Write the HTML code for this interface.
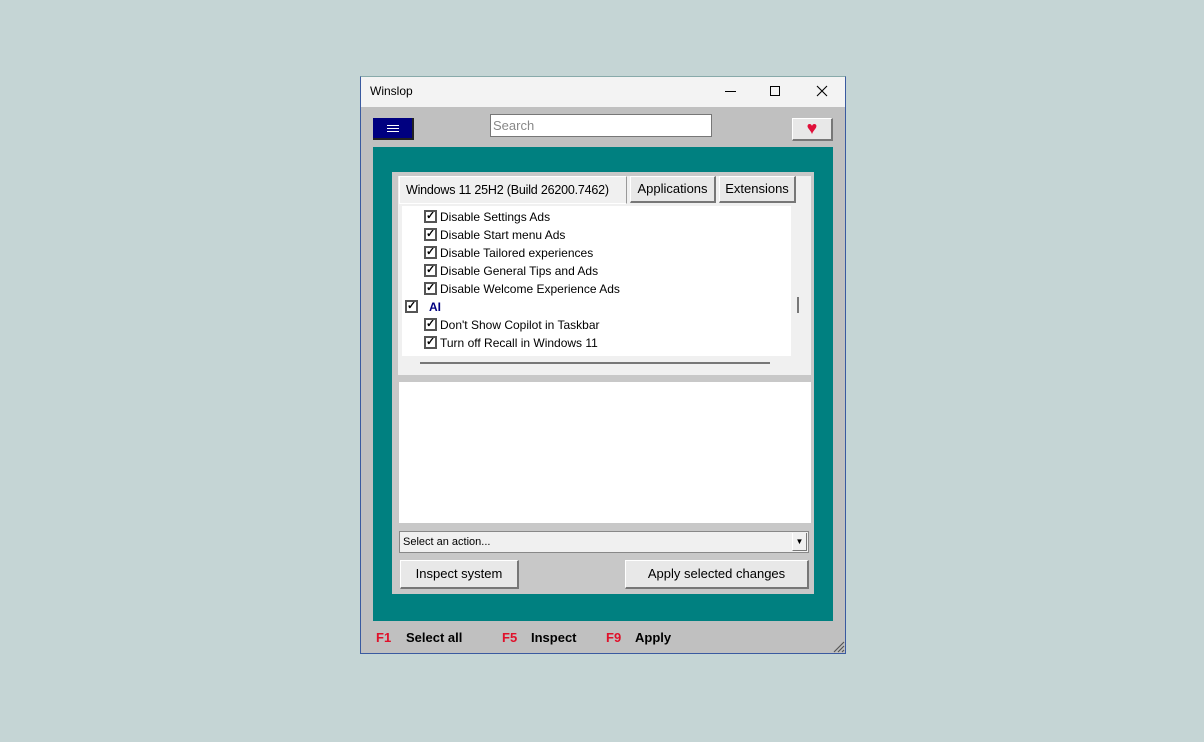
<!DOCTYPE html>
<html><head><meta charset="utf-8"><style>
*{margin:0;padding:0;box-sizing:border-box}
body{width:1204px;height:742px;background:#c5d5d5;position:relative;overflow:hidden;font-family:"Liberation Sans",Arial,sans-serif}
.a{position:absolute;white-space:nowrap}
.chk{position:absolute;width:13px;height:13px;border:2px solid #555;background:#fff;font-size:11px;line-height:9px;text-align:center;font-weight:bold;color:#000}
.it{position:absolute;font-size:12px;color:#000;white-space:nowrap}
.btn{position:absolute;background:#e8e8e8;border:1px solid #fff;border-right:2px solid #777;border-bottom:2px solid #777;font-size:13px;text-align:center;white-space:nowrap}
</style></head><body>
<div class="a" style="left:360px;top:76px;width:486px;height:578px;background:#c0c0c0;border:1px solid #3a5aa0;border-top-color:#8aa;"></div>
<div class="a" style="left:361px;top:77px;width:484px;height:30px;background:#f3f3f3"></div>
<div class="a" style="left:370px;top:84px;font-size:12px">Winslop</div>
<div class="a" style="left:725px;top:91px;width:11px;height:1px;background:#000"></div>
<div class="a" style="left:770px;top:86px;width:10px;height:10px;border:1px solid #000"></div>
<svg class="a" style="left:816px;top:85px" width="12" height="12"><path d="M1 1L11 11M11 1L1 11" stroke="#000" stroke-width="1.1"/></svg>
<div class="a" style="left:373px;top:118px;width:41px;height:22px;background:#000080;border-right:2px solid #222;border-bottom:2px solid #222"></div>
<div class="a" style="left:387px;top:125px;width:12px;height:7px;border-top:1px solid #fff;border-bottom:1px solid #fff"></div>
<div class="a" style="left:387px;top:128px;width:12px;height:1px;background:#fff"></div>
<div class="a" style="left:490px;top:114px;width:222px;height:23px;background:#fff;border:1px solid #777;font-size:13px;color:#888;padding:3px 2px">Search</div>
<div class="btn" style="left:792px;top:118px;width:41px;height:23px;color:#e0103a;font-size:18px;line-height:19px">♥</div>
<div class="a" style="left:373px;top:147px;width:460px;height:474px;background:#008080"></div>
<div class="a" style="left:392px;top:172px;width:422px;height:422px;background:#c8c8c8"></div>
<div class="a" style="left:398px;top:176px;width:413px;height:199px;background:#f0f0f0"></div>
<div class="a" style="left:399px;top:176px;width:228px;height:28px;background:#f0f0f0;border:1px solid #fff;border-right-color:#999;font-size:12.5px;letter-spacing:-0.2px;padding:6px 6px">Windows 11 25H2 (Build 26200.7462)</div>
<div class="btn" style="left:630px;top:176px;width:86px;height:27px;line-height:23px">Applications</div>
<div class="btn" style="left:719px;top:176px;width:77px;height:27px;line-height:23px">Extensions</div>
<div class="a" style="left:402px;top:206px;width:389px;height:150px;background:#fff"></div>
<div class="a" style="left:797px;top:297px;width:2px;height:16px;background:#777"></div>
<div class="a" style="left:420px;top:362px;width:350px;height:2px;background:#777"></div>
<div class="chk" style="left:424px;top:210px">✓</div><div class="it" style="left:440px;top:210px">Disable Settings Ads</div>
<div class="chk" style="left:424px;top:228px">✓</div><div class="it" style="left:440px;top:228px">Disable Start menu Ads</div>
<div class="chk" style="left:424px;top:246px">✓</div><div class="it" style="left:440px;top:246px">Disable Tailored experiences</div>
<div class="chk" style="left:424px;top:264px">✓</div><div class="it" style="left:440px;top:264px">Disable General Tips and Ads</div>
<div class="chk" style="left:424px;top:282px">✓</div><div class="it" style="left:440px;top:282px">Disable Welcome Experience Ads</div>
<div class="chk" style="left:405px;top:300px">✓</div><div class="it" style="left:429px;top:300px;color:#000080;font-weight:bold">AI</div>
<div class="chk" style="left:424px;top:318px">✓</div><div class="it" style="left:440px;top:318px">Don't Show Copilot in Taskbar</div>
<div class="chk" style="left:424px;top:336px">✓</div><div class="it" style="left:440px;top:336px">Turn off Recall in Windows 11</div>
<div class="a" style="left:399px;top:382px;width:412px;height:141px;background:#fff"></div>
<div class="a" style="left:399px;top:531px;width:410px;height:22px;background:#f0f0f0;border:1px solid #888;font-size:11px;padding:4px 3px">Select an action...</div>
<div class="a" style="left:792px;top:533px;width:15px;height:18px;background:#f0f0f0;border-left:1px solid #fff;border-right:1px solid #777;border-bottom:1px solid #777;font-size:8px;text-align:center;line-height:17px">▼</div>
<div class="btn" style="left:400px;top:560px;width:119px;height:29px;line-height:26px">Inspect system</div>
<div class="btn" style="left:625px;top:560px;width:184px;height:29px;line-height:26px">Apply selected changes</div>
<div class="a" style="left:376px;top:630px;font-size:13px;font-weight:bold;color:#e0102a">F1</div>
<div class="a" style="left:406px;top:630px;font-size:13px;font-weight:bold">Select all</div>
<div class="a" style="left:502px;top:630px;font-size:13px;font-weight:bold;color:#e0102a">F5</div>
<div class="a" style="left:531px;top:630px;font-size:13px;font-weight:bold">Inspect</div>
<div class="a" style="left:606px;top:630px;font-size:13px;font-weight:bold;color:#e0102a">F9</div>
<div class="a" style="left:635px;top:630px;font-size:13px;font-weight:bold">Apply</div>
<svg class="a" style="left:832px;top:640px" width="13" height="13"><path d="M12 2L2 12M12 6L6 12M12 10L10 12" stroke="#555" stroke-width="1.2"/></svg>
</body></html>
